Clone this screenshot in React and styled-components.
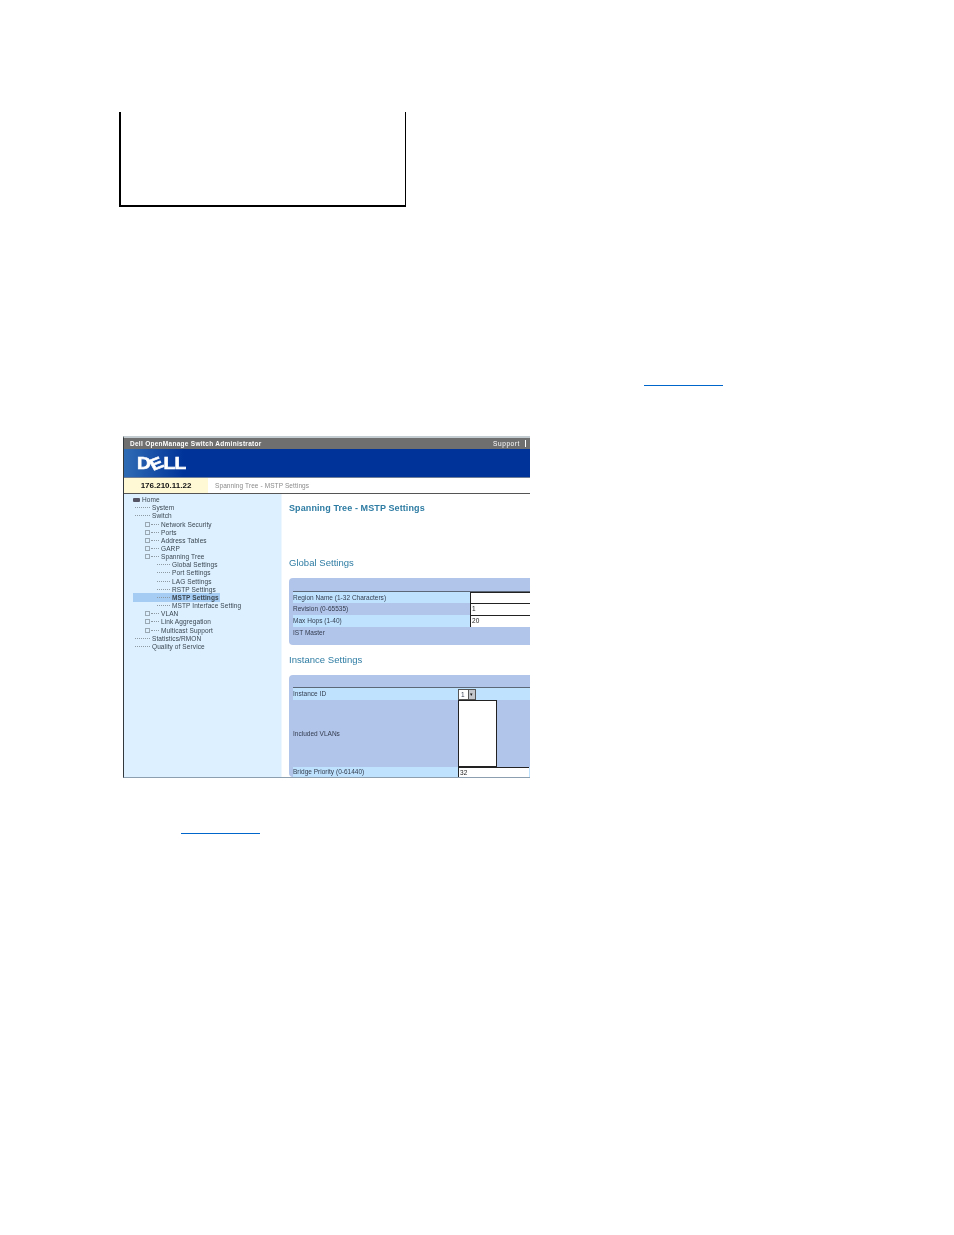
import React from 'react'
import styled, { createGlobalStyle } from 'styled-components'

const GlobalStyle = createGlobalStyle`
html, body {
  margin: 0;
  padding: 0;
  background: #fff;
  font-family: "Liberation Sans", Arial, sans-serif;
}
`

const Page = styled.div`
width: 954px;
height: 1235px;
padding-top: 112px;
box-sizing: border-box;
overflow: hidden;
`

const NoteBox = styled.div`
width: 287px;
height: 95px;
margin-left: 119px;
box-sizing: border-box;
border-left: 2px solid #000;
border-right: 1px solid #000;
border-bottom: 2px solid #000;
`

const LinkRule = styled.div`
width: 79px;
height: 1px;
background: #0066cc;
margin-left: ${props => props.$left}px;
margin-top: ${props => props.$top}px;
`

const Shot = styled.div`
width: 407px;
height: 342px;
margin: 50px 0 0 123px;
box-sizing: border-box;
border-top: 2px solid #c3ccd0;
border-left: 1px solid #33383d;
border-bottom: 1px solid #8b9fb0;
display: flex;
flex-direction: column;
overflow: hidden;
filter: blur(0.35px);
`

const TitleBar = styled.div`
height: 11px;
flex: none;
background: #6f6f6f;
color: #fff;
display: flex;
align-items: center;
justify-content: space-between;
padding: 0 4px 0 6px;
font-size: 6.5px;
font-weight: bold;
letter-spacing: 0.28px;
`

const SupportLink = styled.span`
font-weight: normal;
border-right: 1px solid #fff;
padding-right: 5px;
letter-spacing: 0.6px;
`

const Banner = styled.div`
height: 29px;
flex: none;
background: linear-gradient(90deg, #2f6cb5 0, #003399 60px);
display: flex;
align-items: center;
padding: 1px 0 0 13px;
box-sizing: border-box;
border-bottom: 1px solid #6f7f99;
`

const Logo = styled.div`
color: #fff;
font-size: 16px;
font-weight: bold;
-webkit-text-stroke: 0.6px #fff;
display: flex;
align-items: center;
letter-spacing: -0.6px;
transform: scaleX(1.2);
transform-origin: left center;
`

const LogoE = styled.span`
display: inline-block;
transform: rotate(-25deg);
margin: 0 0.5px;
`

const TabRow = styled.div`
height: 16px;
flex: none;
display: flex;
border-bottom: 1px solid #555;
box-sizing: border-box;
`

const IpCell = styled.div`
width: 84px;
background: #fff9d6;
color: #111;
font-size: 8px;
font-weight: bold;
display: flex;
align-items: center;
justify-content: center;
padding-bottom: 1px;
box-sizing: border-box;
`

const Crumb = styled.div`
flex: 1;
color: #8a8a8a;
font-size: 6.5px;
letter-spacing: 0.1px;
display: flex;
align-items: center;
padding: 0 0 1px 7px;
`

const Body = styled.div`
flex: 1;
display: flex;
min-height: 0;
`

const Sidebar = styled.div`
width: 157px;
flex: none;
background: #dcf0ff;
padding: 1.5px 0 0 9px;
box-sizing: border-box;
`

const TreeRow = styled.div`
height: 8.17px;
width: fit-content;
display: flex;
align-items: center;
padding-left: ${props => props.$indent}px;
padding-right: ${props => (props.$selected ? 1 : 0)}px;
background: ${props => (props.$selected ? '#a5cdf3' : 'transparent')};
font-size: 6.5px;
letter-spacing: 0.1px;
color: #3b4650;
font-weight: ${props => (props.$selected ? 'bold' : 'normal')};
white-space: nowrap;
`

const Expander = styled.span`
width: 5px;
height: 5px;
flex: none;
border: 1px solid #9aa8b3;
box-sizing: border-box;
margin-right: 1px;
`

const Dashes = styled.span`
width: ${props => props.$width}px;
flex: none;
border-top: 1px dotted #8d99a3;
margin-right: 2px;
`

const HomeIcon = styled.span`
width: 7px;
height: 4px;
flex: none;
background: #556;
border-radius: 1px;
margin-right: 2px;
`

const Main = styled.div`
flex: 1;
min-width: 0;
background: #fff;
padding-left: 7px;
border-left: 1px solid #eef7fd;
color: #2e7ca3;
overflow: hidden;
`

const PageTitle = styled.h1`
margin: 8px 0 0;
height: 13px;
line-height: 13px;
font-size: 9px;
font-weight: bold;
letter-spacing: 0.1px;
white-space: nowrap;
`

const SectionTitle = styled.h2`
margin: ${props => props.$top}px 0 0;
height: 13px;
line-height: 13px;
font-size: 9.5px;
font-weight: normal;
letter-spacing: 0.03px;
white-space: nowrap;
`

const Panel = styled.div`
margin-top: 9px;
width: 260px;
background-color: #b1c4ea;
background-image: radial-gradient(#bccdf0 0.6px, transparent 0.7px);
background-size: 2px 2px;
border-radius: 4px 0 0 4px;
padding-top: ${props => props.$head}px;
`

const Rows = styled.div`
border-top: 1px solid #5c6878;
margin-left: 4px;
`

const Row = styled.div`
height: ${props => props.$height}px;
display: flex;
align-items: ${props => (props.$top ? 'flex-start' : 'center')};
background: ${props => (props.$light ? '#bfe3ff' : 'transparent')};
font-size: 6.5px;
line-height: ${props => (props.$top ? '12px' : '10px')};
color: #333c4d;
letter-spacing: 0.02px;
white-space: nowrap;
`

const Label = styled.div`
width: ${props => props.$width}px;
flex: none;
box-sizing: border-box;
`

const FieldInput = styled.div`
width: ${props => props.$width}px;
height: 100%;
flex: none;
background: #fff;
border-top: 1px solid #222;
border-left: 1px solid #222;
box-sizing: border-box;
color: #222;
padding-left: 1px;
`

const ListBox = styled.div`
width: 39px;
height: 100%;
flex: none;
background: #fff;
border: 1px solid #222;
box-sizing: border-box;
`

const SelectBox = styled.div`
width: 18px;
height: 11px;
flex: none;
background: #fff;
border: 1px solid #555;
box-sizing: border-box;
display: flex;
justify-content: space-between;
padding-left: 2px;
`

const SelectArrow = styled.span`
width: 6px;
background: #c4c8cc;
border-left: 1px solid #555;
color: #111;
font-size: 5px;
line-height: 9px;
text-align: center;
`

const tree = [
  { text: 'Home', indent: 0, home: true },
  { text: 'System', indent: 2, dash: 15 },
  { text: 'Switch', indent: 2, dash: 15 },
  { text: 'Network Security', indent: 12, box: true, dash: 8 },
  { text: 'Ports', indent: 12, box: true, dash: 8 },
  { text: 'Address Tables', indent: 12, box: true, dash: 8 },
  { text: 'GARP', indent: 12, box: true, dash: 8 },
  { text: 'Spanning Tree', indent: 12, box: true, dash: 8 },
  { text: 'Global Settings', indent: 24, dash: 13 },
  { text: 'Port Settings', indent: 24, dash: 13 },
  { text: 'LAG Settings', indent: 24, dash: 13 },
  { text: 'RSTP Settings', indent: 24, dash: 13 },
  { text: 'MSTP Settings', indent: 24, dash: 13, selected: true },
  { text: 'MSTP Interface Setting', indent: 24, dash: 13 },
  { text: 'VLAN', indent: 12, box: true, dash: 8 },
  { text: 'Link Aggregation', indent: 12, box: true, dash: 8 },
  { text: 'Multicast Support', indent: 12, box: true, dash: 8 },
  { text: 'Statistics/RMON', indent: 2, dash: 15 },
  { text: 'Quality of Service', indent: 2, dash: 15 },
]

const App = () => {
  return (
    <Page>
      <GlobalStyle />
      <NoteBox />
      <LinkRule $left={644} $top={178} />
      <Shot>
        <TitleBar>
          <span>Dell OpenManage Switch Administrator</span>
          <SupportLink>Support</SupportLink>
        </TitleBar>
        <Banner>
          <Logo>D<LogoE>E</LogoE>LL</Logo>
        </Banner>
        <TabRow>
          <IpCell>176.210.11.22</IpCell>
          <Crumb>Spanning Tree - MSTP Settings</Crumb>
        </TabRow>
        <Body>
          <Sidebar>
            {tree.map(item => (
              <TreeRow key={item.text} $indent={item.indent} $selected={item.selected}>
                {item.home && <HomeIcon />}
                {item.box && <Expander />}
                {item.dash && <Dashes $width={item.dash} />}
                {item.text}
              </TreeRow>
            ))}
          </Sidebar>
          <Main>
            <PageTitle>Spanning Tree - MSTP Settings</PageTitle>
            <SectionTitle $top={41}>Global Settings</SectionTitle>
            <Panel $head={13}>
              <Rows>
                <Row $height={11} $light><Label $width={177}>Region Name (1-32 Characters)</Label><FieldInput $width={70} /></Row>
                <Row $height={12}><Label $width={177}>Revision (0-65535)</Label><FieldInput $width={70}>1</FieldInput></Row>
                <Row $height={12} $light><Label $width={177}>Max Hops (1-40)</Label><FieldInput $width={70}>20</FieldInput></Row>
                <Row $height={18} $top><Label $width={177}>IST Master</Label></Row>
              </Rows>
            </Panel>
            <SectionTitle $top={8}>Instance Settings</SectionTitle>
            <Panel $head={12}>
              <Rows>
                <Row $height={12} $light><Label $width={165}>Instance ID</Label><SelectBox>1<SelectArrow>▾</SelectArrow></SelectBox></Row>
                <Row $height={67}><Label $width={165}>Included VLANs</Label><ListBox /></Row>
                <Row $height={10} $light><Label $width={165}>Bridge Priority (0-61440)</Label><FieldInput $width={71}>32</FieldInput></Row>
              </Rows>
            </Panel>
          </Main>
        </Body>
      </Shot>
      <LinkRule $left={181} $top={55} />
    </Page>
  )
}

export default App
